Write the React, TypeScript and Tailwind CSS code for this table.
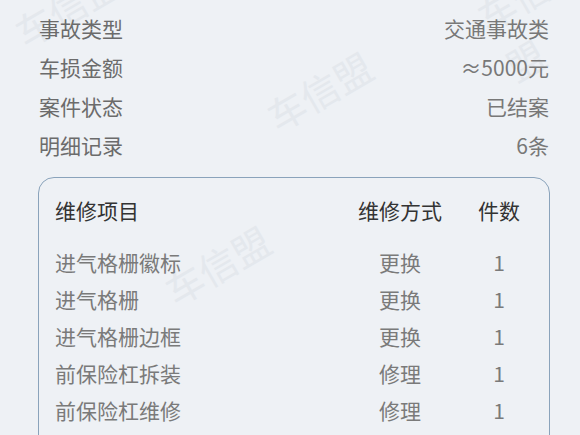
const summary = [
  { label: "事故类型", value: "交通事故类" },
  { label: "车损金额", value: "≈5000元" },
  { label: "案件状态", value: "已结案" },
  { label: "明细记录", value: "6条" },
];

const items = [
  { name: "进气格栅徽标", method: "更换", count: 1 },
  { name: "进气格栅", method: "更换", count: 1 },
  { name: "进气格栅边框", method: "更换", count: 1 },
  { name: "前保险杠拆装", method: "修理", count: 1 },
  { name: "前保险杠维修", method: "修理", count: 1 },
  { name: "前保险杠皮", method: "更换", count: 1 },
];

const marks = [
  { left: 10, top: -22 },
  { left: 262, top: 62 },
  { left: 488, top: -36 },
  { left: 160, top: 236 },
];

export default function App() {
  return (
    <div
      className="relative w-[580px] h-[435px] overflow-hidden bg-[#eef1f5] text-[21px]"
      style={{ fontFamily: '"Noto Sans CJK SC", "Noto Sans", sans-serif' }}
    >
      {/* watermark */}
      {marks.map((m, i) => (
        <span
          key={i}
          aria-hidden
          className="absolute text-[38px] font-normal text-[#e4e8ed] -rotate-[30deg] select-none pointer-events-none"
          style={{ left: m.left, top: m.top }}
        >
          车信盟
        </span>
      ))}

      <div className="relative pl-[39px] pr-[31px] pt-[9px]">
        {summary.map((row) => (
          <div key={row.label} className="flex items-center justify-between h-[39px]">
            <span className="text-[#6b6b6b]">{row.label}</span>
            <span className="text-[#787878]">{row.value}</span>
          </div>
        ))}

        <div className="mt-[12px] -mx-px rounded-[16px] border border-[#8aa3bb] px-4 pt-[14px] pb-4">
          <div className="flex items-center h-[37px] text-[#333]">
            <span className="flex-1">维修项目</span>
            <span className="w-[130px] text-center">维修方式</span>
            <span className="w-[68px] text-center">件数</span>
          </div>
          <div className="mt-[15px]">
            {items.map((it) => (
              <div key={it.name} className="flex items-center h-[37px] text-[#7a7a7a]">
                <span className="flex-1">{it.name}</span>
                <span className="w-[130px] text-center">{it.method}</span>
                <span className="w-[68px] text-center">{it.count}</span>
              </div>
            ))}
          </div>
        </div>
      </div>
    </div>
  );
}
